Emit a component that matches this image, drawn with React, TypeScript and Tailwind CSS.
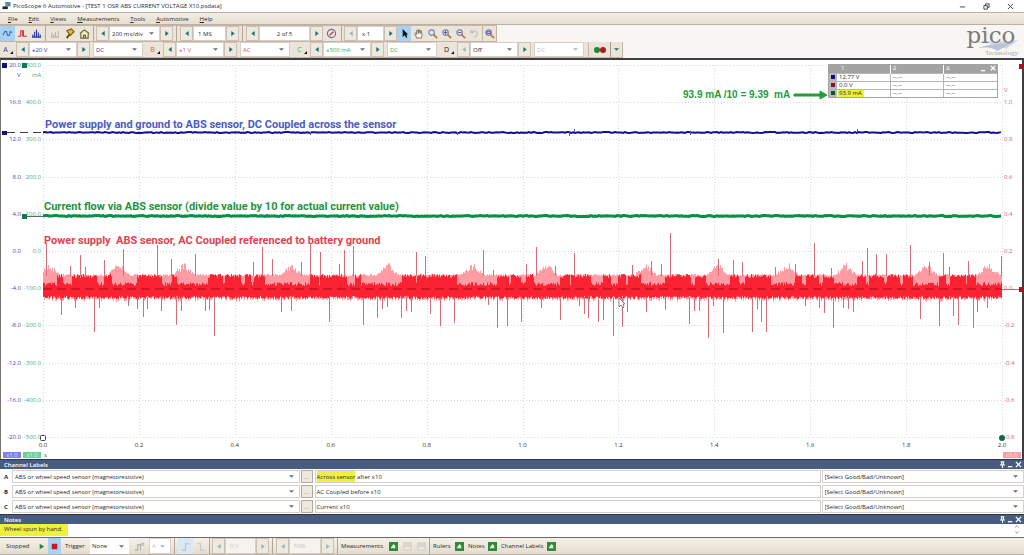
import type { ReactNode } from "react";
import clsx from "clsx";

const LEFT = 43;
const RIGHT = 1002;
const TOP = 65;
const STEP_X = 95.9;
const STEP_Y = 37.2;

// Noise peaks of the AC coupled trace as [x, tip]
const peaks = [
  [46, 243], [70, 266], [80, 255], [85, 267], [104, 260], [123, 249], [157, 245], [171, 259], [195, 254],
  [253, 262], [262, 247], [272, 259], [301, 262], [310, 244], [320, 252], [339, 264], [344, 250], [353, 246],
  [416, 252], [425, 256], [483, 250], [493, 270], [526, 264], [536, 247], [555, 266], [574, 253], [632, 265],
  [651, 261], [661, 264], [670, 233], [718, 259], [733, 260], [742, 262], [775, 267], [795, 264], [814, 243],
  [831, 268], [862, 261], [867, 248], [876, 254], [886, 254], [910, 245], [929, 262], [943, 253], [949, 267],
  [968, 261], [1001, 256],
];

const dips = [
  [61, 315], [75, 308], [94, 332], [99, 308], [128, 306], [137, 309], [143, 317], [147, 309], [161, 311],
  [176, 325], [181, 311], [205, 311], [209, 310], [214, 336], [281, 312], [291, 311], [329, 322], [363, 325],
  [377, 318], [382, 309], [387, 307], [401, 318], [406, 311], [411, 312], [430, 314], [440, 326], [454, 323],
  [488, 305], [497, 328], [507, 326], [521, 322], [541, 308], [560, 320], [579, 306], [584, 314], [588, 318],
  [598, 322], [603, 320], [613, 336], [622, 327], [627, 312], [646, 312], [665, 310], [689, 324], [694, 311],
  [699, 311], [708, 338], [713, 306], [723, 333], [752, 332], [757, 309], [761, 322], [766, 332], [805, 306],
  [819, 308], [824, 313], [833, 328], [843, 308], [848, 309], [853, 312], [920, 319], [939, 326], [953, 316],
  [958, 325], [973, 328], [977, 312], [987, 308],
];

// Stretches where the dense part of the trace fills the whole band
const dense = [
  [57, 62], [72, 96], [104, 111], [137, 161], [172, 176], [208, 222], [225, 240], [245, 250], [254, 264],
  [310, 318], [320, 346], [355, 360], [402, 415], [417, 440], [441, 456], [497, 508], [511, 520], [526, 533],
  [560, 569], [571, 590], [603, 610], [618, 625], [628, 640], [665, 690], [695, 705], [730, 738], [745, 770],
  [795, 801], [806, 818], [823, 833], [857, 865], [869, 883], [887, 899], [903, 912], [939, 945], [950, 965],
  [967, 975],
];

const bumps = [49, 118, 183, 291, 387, 472, 546, 645, 717, 787, 845, 926, 988];

function makeRandom(seed: number) {
  let s = seed;
  return () => {
    s = (s * 16807) % 2147483647;
    return s / 2147483647;
  };
}

function buildNoise() {
  const rand = makeRandom(77);
  let light = "";
  let dark = "";
  for (let x = LEFT; x < RIGHT; x++) {
    const dist = Math.min(...bumps.map((b) => Math.abs(b - x)));
    const lift = Math.max(0, 11 - dist) * (0.5 + rand() * 0.7);
    const lightTop = 274 + rand() * 2 - lift;
    const full = dense.some(([a, b]) => x >= a && x <= b);
    const darkTop = full ? 274 + rand() * 4 : 282 + rand() * 4;
    const bottom = 296 + rand() * 3;
    light += `M${x}.5 ${lightTop.toFixed(1)}V${(bottom + rand() * 3).toFixed(1)}`;
    dark += `M${x}.5 ${darkTop.toFixed(1)}V${bottom.toFixed(1)}`;
  }
  return { light, dark };
}

function buildFlat(y: number, seed: number, spread: number) {
  const rand = makeRandom(seed);
  let d = `M${LEFT} ${y}`;
  for (let x = LEFT + 2; x <= RIGHT; x += 2) {
    d += `L${x} ${(y + (rand() - 0.5) * spread).toFixed(1)}`;
  }
  return d;
}

const noise = buildNoise();

function Scope() {
  const rows = Array.from({ length: 11 }, (_, i) => TOP + i * STEP_Y);
  const cols = Array.from({ length: 11 }, (_, i) => LEFT + i * STEP_X);

  return (
    <svg viewBox="0 60 1024 399" className="block w-full text-[6px]" role="img" aria-label="Scope view">
      <rect x="0" y="60" width="1024" height="399" fill="#ffffff" />
      <rect x="0" y="60" width="1" height="399" fill="#77736e" />
      <rect x="1022" y="60" width="2" height="399" fill="#3f3f42" />

      <g stroke="#cfdede" strokeWidth="1" strokeDasharray="1 2">
        {rows.map((y) => (
          <line key={y} x1={LEFT} x2={RIGHT} y1={Math.round(y) + 0.5} y2={Math.round(y) + 0.5} />
        ))}
        {cols.map((x) => (
          <line key={x} x1={Math.round(x) + 0.5} x2={Math.round(x) + 0.5} y1={TOP} y2="437" />
        ))}
      </g>

      {rows.map((y, i) => (
        <g key={y} textAnchor="end">
          <text x="21" y={y + 2} fill="#4a40b8">{(20 - i * 4).toFixed(1)}</text>
          <text x="41" y={y + 2} fill="#3fae7c">{(500 - i * 100).toFixed(1)}</text>
        </g>
      ))}
      <text x="17" y="77" fill="#4a40b8">V</text>
      <text x="32" y="77" fill="#3fae7c">mA</text>

      {rows.slice(1).map((y, i) => (
        <text key={y} x="1004" y={y + 2} fill="#e0606a">{(1 - i * 0.2).toFixed(1).replace("-0.0", "0.0")}</text>
      ))}
      <text x="1004" y="92" fill="#e0606a">V</text>

      {cols.map((x, i) => (
        <text key={x} x={x} y="447" textAnchor="middle" fill="#333333">{(i * 0.2).toFixed(1)}</text>
      ))}

      {/* channel A */}
      <path d="M7 132.5H43" stroke="#444444" strokeDasharray="8 5" />
      <path d={buildFlat(132.5, 11, 1)} fill="none" stroke="#12128c" strokeWidth="2" />
      <path d="M574.5 129V132M569.5 132V136M310.5 132V135M457.5 132V135M690.5 132V135M857.5 129V132" stroke="#5555b0" />

      {/* channel C */}
      <path d="M27 216.5H43" stroke="#666666" />
      <path d={buildFlat(216, 23, 1)} fill="none" stroke="#0b8f45" strokeWidth="3" />

      {/* channel B */}
      <path d={noise.light} stroke="#ff9ba2" />
      <path d={noise.dark} stroke="#fb2232" />
      <path
        d={peaks.map(([x, y]) => `M${x}.5 ${y}V276`).join("") + dips.map(([x, y]) => `M${x}.5 297V${y}`).join("")}
        stroke="#d2707a"
      />
      <path d="M43 289H1002" stroke="#a30c1c" strokeDasharray="9 5" />
      <path d="M1002 289.5H1019" stroke="#b07070" />

      {/* axis handles */}
      <g fill="#10107c">
        <rect x="2" y="63" width="5" height="5" />
        <rect x="2" y="131" width="5" height="4" />
      </g>
      <g fill="#12774a">
        <rect x="22" y="63" width="5" height="5" />
        <rect x="22" y="214" width="5" height="5" />
      </g>
      <g fill="#a01824">
        <rect x="1019" y="64" width="4" height="5" />
        <rect x="1019" y="287" width="4" height="5" />
      </g>
      <rect x="40.5" y="435.5" width="5" height="5" rx="1" fill="#ffffff" stroke="#444444" />
      <circle cx="1002" cy="438" r="3" fill="#0a6b4a" />

      {/* axis scale badges */}
      <rect x="3" y="452" width="18" height="6" fill="#7f7fee" />
      <rect x="23" y="452" width="18" height="6" fill="#6fcf9a" />
      <rect x="1003" y="452" width="18" height="6" fill="#fb9da0" />
      <g fill="#ffffff" textAnchor="middle" opacity="0.7">
        <text x="12" y="457">x1.0</text>
        <text x="32" y="457">x1.0</text>
        <text x="1012" y="457">x1.0</text>
      </g>
      <text x="44" y="457" fill="#444444">s</text>

      <g className="font-[Roboto,sans-serif] text-[11px] font-bold">
        <text x="45" y="128" fill="#4a5cc4">Power supply and ground to ABS sensor, DC Coupled across the sensor</text>
        <text x="44" y="210" fill="#1f9440">Current flow via ABS sensor (divide value by 10 for actual current value)</text>
        <text x="44" y="244" fill="#e2434e" xmlSpace="preserve">Power supply  ABS sensor, AC Coupled referenced to battery ground</text>
      </g>
      <text x="683" y="98" fill="#279a3c" xmlSpace="preserve" className="font-['Liberation_Sans',sans-serif] text-[10px] font-bold">
        93.9 mA /10 = 9.39  mA
      </text>
      <path d="M794 94H820V91L827 95L820 99V96H794Z" fill="#279a3c" stroke="#279a3c" strokeLinejoin="round" />

      <path d="M619 298V307L621 305L623 308L624 307L623 304H625Z" fill="#ffffff" stroke="#555566" strokeWidth="0.7" />
    </svg>
  );
}

const readings = [
  { value: "12.77 V", color: "bg-[#10107c]", marked: false },
  { value: "0.0 V", color: "bg-[#8c1420]", marked: false },
  { value: "93.9 mA", color: "bg-[#0f5a34]", marked: true },
];

function RulerLegend() {
  return (
    <div className="absolute top-1 right-[26px] w-[170px] border border-[#a3a3a3] bg-white">
      <table className="w-full table-fixed border-collapse text-left leading-[7px]">
        <thead className="bg-[#a3a3a3] text-white">
          <tr className="h-[8px]">
            <th className="w-[8px] p-0" />
            <th className="p-0 pl-1 font-normal">1</th>
            <th className="border-l border-white p-0 pl-[2px] font-normal">2</th>
            <th className="border-l border-white p-0 pl-[2px] font-normal">
              <div className="flex items-center gap-[3px]">
                <span className="flex-1">Δ</span>
                <PanelButton label="Minimise rulers"><path d="M1 6.500H6" /></PanelButton>
                <PanelButton label="Close rulers"><path d="M1 1L6 6M6 1L1 6" /></PanelButton>
              </div>
            </th>
          </tr>
        </thead>
        <tbody>
          {readings.map((r) => (
            <tr key={r.value} className="h-[8px] border-t border-[#b5b5b5]">
              <td className="bg-[#b9b9b9] p-0">
                <div className={clsx("ml-[2px] h-[4px] w-[4px]", r.color)} />
              </td>
              <td className="p-0 pl-px">
                <span className={clsx("block px-px", r.marked ? "w-[26px] bg-[#eef03c]" : "")}>{r.value}</span>
              </td>
              <td className="border-l border-[#b5b5b5] p-0 pl-[2px]">--.--</td>
              <td className="border-l border-[#b5b5b5] p-0 pl-[2px]">--.--</td>
            </tr>
          ))}
        </tbody>
      </table>
    </div>
  );
}

function PanelButton({ label, children }: { label: string; children: ReactNode }) {
  return (
    <button type="button" aria-label={label} className="flex">
      <svg viewBox="0 0 8 8" className="h-[7px] w-[7px]" fill="none" stroke="currentColor" strokeWidth="1.5">
        {children}
      </svg>
    </button>
  );
}

function Arrow({ dir, label, faint }: { dir: "left" | "right"; label: string; faint?: boolean }) {
  return (
    <button
      type="button"
      aria-label={label}
      disabled={faint}
      className={clsx(
        "flex w-[13px] shrink-0 items-center justify-center border border-[#cdbfb2] bg-[#efe8dc]",
        faint ? "text-[#8fb9c4]" : "text-[#14727f]"
      )}
    >
      <svg viewBox="0 0 4 6" className="h-[5px] w-[4px]" fill="currentColor">
        <path d={dir === "left" ? "M4 0V6L0 3Z" : "M0 0V6L4 3Z"} />
      </svg>
    </button>
  );
}

interface DropProps {
  label: string;
  value: string;
  className?: string;
  disabled?: boolean;
}

function Drop({ label, value, className, disabled }: DropProps) {
  return (
    <div className={clsx("flex min-w-0 items-center border border-[#d8d0c8] bg-white", className)}>
      <select
        aria-label={label}
        disabled={disabled}
        className={clsx(
          "-mr-[10px] h-full w-full min-w-0 appearance-none bg-transparent pr-[10px] pl-[2px] outline-none",
          disabled && "opacity-30"
        )}
      >
        <option>{value}</option>
      </select>
      <svg viewBox="0 0 6 3" className="pointer-events-none mr-1 h-[3px] w-[5px] shrink-0" fill={disabled ? "#b8b8b8" : "#66727c"}>
        <path d="M0 0H6L3 3Z" />
      </svg>
    </div>
  );
}

function Field({ label, value, className, disabled }: DropProps) {
  return (
    <input
      aria-label={label}
      defaultValue={value}
      disabled={disabled}
      className={clsx("min-w-0 border border-[#d8d0c8] bg-white px-1 outline-none disabled:bg-[#f6f3ee] disabled:text-[#c9c5c0]", className)}
    />
  );
}

function Tool({ label, active, className, children }: { label: string; active?: boolean; className: string; children: ReactNode }) {
  return (
    <button
      type="button"
      aria-label={label}
      className={clsx("flex shrink-0 items-center justify-center", active && "bg-[#a9d2f2]", className)}
    >
      <svg viewBox="0 0 12 12" className="h-[11px] w-[11px]" fill="none" stroke="currentColor" strokeWidth="1.2">
        {children}
      </svg>
    </button>
  );
}

function Grip({ wide }: { wide?: boolean }) {
  return <span className={clsx("w-px shrink-0 bg-[#b3a597]", wide ? "mx-[3px]" : "mx-[2px]")} />;
}

function Lens({ mark }: { mark?: string }) {
  return (
    <>
      <path d="M7 7L11 11" stroke="#b5803c" strokeWidth="2" />
      <circle cx="5" cy="5" r="3" fill="#dfe6f6" stroke="#7a80a8" />
      {mark && <path d={mark} stroke="#5a4a9c" strokeWidth="1" />}
    </>
  );
}

function MainToolbar() {
  return (
    <div className="flex h-[17px] w-[497px] border-y border-r border-[#c4b5a8] bg-[#ebe4d9]">
      <Tool label="Scope mode" active className="w-[15px] text-[#3a6fc0]">
        <path d="M1 8L3 4L5 4L6 8L8 8L9 4L11 5" />
      </Tool>
      <Tool label="Persistence mode" className="w-[14px] text-[#c83848]">
        <path d="M1 9H4V3H7V9H11M6 3V9" />
      </Tool>
      <Tool label="Spectrum mode" className="w-[14px] text-[#2433a0]">
        <path d="M2 10V7M4 10V4M6 10V2M8 10V5M10 10V7M1 10H11" />
      </Tool>
      <Grip />
      <Tool label="Rulers" className="w-[14px] text-[#b9b4b0]">
        <path d="M2 10V5M4 10V7M6 10V4M9 3V9M1 10H10" />
      </Tool>
      <Tool label="Probes" className="w-[15px]">
        <path d="M3 11L6 7" stroke="#5a4a10" strokeWidth="2" />
        <path d="M3 3L8 1L11 4L7 8Z" fill="#e5b52c" stroke="#7a5a10" />
      </Tool>
      <Tool label="Home" className="w-[14px]">
        <path d="M1 6L6 2L11 6M2 6V11H10V6" fill="#f4e9b8" stroke="#6b6238" />
        <path d="M5 11V8H7V11" stroke="#6b6238" />
      </Tool>
      <Grip />
      <Arrow dir="left" label="Faster timebase" />
      <Drop label="Timebase" value="200 ms/div" className="w-[51px]" />
      <Arrow dir="right" label="Slower timebase" />
      <Grip wide />
      <Arrow dir="left" label="Fewer samples" />
      <Field label="Samples" value="1 MS" className="w-[33px]" />
      <Arrow dir="right" label="More samples" />
      <Grip wide />
      <Arrow dir="left" label="Previous waveform" />
      <Field label="Waveform" value="2 of 5" className="w-[51px] text-center" />
      <Arrow dir="right" label="Next waveform" />
      <Tool label="Waveform navigator" className="w-[16px]">
        <circle cx="6" cy="6" r="4.500" stroke="#6a6a9c" />
        <path d="M4 8L8 4" stroke="#c04050" strokeWidth="1.600" />
      </Tool>
      <Grip />
      <Arrow dir="left" label="Zoom out step" faint />
      <Field label="Zoom" value="x 1" className="w-[27px]" />
      <Arrow dir="right" label="Zoom in step" />
      <Tool label="Select" active className="w-[14px]">
        <path d="M4 1V10L6 8L8 11L9 10L8 7H10Z" fill="#111111" stroke="none" />
      </Tool>
      <Tool label="Pan" className="w-[15px]">
        <path d="M4 11L2 6L3 5L4 7V3L5 2L6 6V2H7L8 6V3H9L10 8L9 11Z" fill="#fff3e0" stroke="#555555" strokeWidth="0.8" />
      </Tool>
      <Tool label="Marquee zoom" className="w-[13px]"><Lens /></Tool>
      <Tool label="Zoom in" className="w-[14px]"><Lens mark="M3 5H7M5 3V7" /></Tool>
      <Tool label="Zoom out" className="w-[14px]"><Lens mark="M3 5H7" /></Tool>
      <Tool label="Undo zoom" className="w-[15px] text-[#b9bccb]">
        <path d="M2 5C5 2 9 3 9 6C9 8 8 9 6 10M2 2V5H5" />
      </Tool>
      <Tool label="Zoom to full" className="flex-1 border-l border-[#c4b5a8]"><Lens mark="M3 4H7V6H3Z" /></Tool>
    </div>
  );
}

interface Channel {
  name: string;
  range: string;
  coupling: string;
  color: string;
  off?: boolean;
}

const channels: Channel[] = [
  { name: "A", range: "±20 V", coupling: "DC", color: "text-[#3a36a8]" },
  { name: "B", range: "±1 V", coupling: "AC", color: "text-[#e0545e]" },
  { name: "C", range: "±500 mA", coupling: "DC", color: "text-[#35b070]" },
  { name: "D", range: "Off", coupling: "DC", color: "text-[#222222]", off: true },
];

function ChannelToolbar() {
  return (
    <div className="flex h-[16px] w-[623px] border-b border-r border-[#c4b5a8] bg-[#ebe4d9]">
      {channels.map((ch) => (
        <div key={ch.name} className={clsx("flex w-[147px] shrink-0 pr-[3px]", ch.color)}>
          <button type="button" aria-label={`Channel ${ch.name} options`} className="flex w-[16px] items-center justify-center gap-[2px] text-[7px]">
            {ch.name}
            <svg viewBox="0 0 4 4" className="mt-[5px] h-[3px] w-[3px]" fill="#111111">
              <path d="M4 0V4H0Z" />
            </svg>
          </button>
          <Arrow dir="left" label={`Channel ${ch.name} range down`} faint={ch.off} />
          <Drop label={`Channel ${ch.name} range`} value={ch.range} className="w-[48px]" />
          <Arrow dir="right" label={`Channel ${ch.name} range up`} />
          <Drop label={`Channel ${ch.name} coupling`} value={ch.coupling} className="ml-[3px] w-[50px]" disabled={ch.off} />
        </div>
      ))}
      <button type="button" aria-label="Channel guide" className="flex flex-1 items-center justify-center border-l border-[#c4b5a8]">
        <svg viewBox="0 0 14 8" className="h-[8px] w-[14px]">
          <path d="M4 4H10" stroke="#333333" />
          <circle cx="4" cy="4" r="3" fill="#1c8a34" />
          <circle cx="10" cy="4" r="3" fill="#b01822" />
        </svg>
      </button>
      <button type="button" aria-label="Guide menu" className="flex w-[12px] items-center justify-center border-l border-[#a89a8e]">
        <svg viewBox="0 0 6 3" className="h-[3px] w-[5px]" fill="#14727f"><path d="M0 0H6L3 3Z" /></svg>
      </button>
    </div>
  );
}

function Logo() {
  return (
    <svg viewBox="0 0 68 33" className="h-[33px] w-[68px] overflow-visible" role="img" aria-label="Pico Technology">
      <path d="M10 18C28 15 42 17 62 15L50 24C42 18 26 17 10 18Z" fill="#d3d9e6" />
      <path d="M22 23C32 19 42 19 60 17C52 20 46 23 42 26C36 22 30 22 22 23Z" fill="#b9c4d8" />
      <text x="35" y="18" textAnchor="middle" fill="#7d7a78" className="font-['DejaVu_Serif',serif] text-[23px]">pico</text>
      <text x="29" y="30" fill="#a9a7a6" className="font-['Liberation_Serif',serif] text-[7px]">Technology</text>
    </svg>
  );
}

function PanelHeader({ title }: { title: string }) {
  return (
    <div className="flex h-[10px] items-center gap-px border-t border-[#2f3542] bg-[#485b80] pr-[2px] pl-1 text-white">
      <h2 className="flex-1 font-semibold">{title}</h2>
      <PanelButton label={`Pin ${title}`}><path d="M2 1H6M3 1V4M5 1V4M1 4.500H7M4 4V8" strokeWidth="1.200" /></PanelButton>
      <PanelButton label={`Minimise ${title}`}><path d="M1 6.500H6" /></PanelButton>
      <PanelButton label={`Close ${title}`}><path d="M1 1L7 7M7 1L1 7" /></PanelButton>
    </div>
  );
}

const labelRows = [
  { id: "A", marked: "Across sensor", note: " after x10" },
  { id: "B", marked: "", note: "AC Coupled before x10" },
  { id: "C", marked: "", note: "Current x10" },
];

function ChannelLabels() {
  return (
    <section className="bg-white">
      <PanelHeader title="Channel Labels" />
      {labelRows.map((row) => (
        <div key={row.id} className="grid h-[15px] grid-cols-[12px_287fr_14px_506fr_203fr] py-px">
          <span className="self-center pl-1 font-bold">{row.id}</span>
          <Drop label={`Sensor ${row.id}`} value="ABS or wheel speed sensor (magnetoresistive)" className="border-[#cfcfcf]" />
          <button type="button" aria-label={`Edit label ${row.id}`} className="mx-px flex items-center justify-center border border-[#b5a89c] bg-[#efe8dc] text-[#8a8078]">
            ...
          </button>
          <div
            role="textbox"
            aria-label={`Note ${row.id}`}
            contentEditable
            suppressContentEditableWarning
            className="ml-px flex items-center border border-[#cfcfcf] pl-px whitespace-pre outline-none"
          >
            {row.marked && <span className="flex h-full items-center bg-[#eef03c]">{row.marked}</span>}
            <span>{row.note}</span>
          </div>
          <Drop label={`Result ${row.id}`} value="[Select Good/Bad/Unknown]" className="ml-px border-[#cfcfcf]" />
        </div>
      ))}
    </section>
  );
}

function Notes() {
  return (
    <section className="bg-white">
      <PanelHeader title="Notes" />
      <div className="flex h-[13px] justify-between pr-1">
        <div
          role="textbox"
          aria-label="Notes"
          contentEditable
          suppressContentEditableWarning
          className="h-[12px] w-[68px] bg-[#eef03c] pl-1 leading-[11px] outline-none"
        >
          Wheel spun by hand.
        </div>
        <svg viewBox="0 0 6 12" className="h-[11px] w-[6px]" fill="none" stroke="#9a9a9a">
          <path d="M1 4L3 2L5 4M1 8L3 10L5 8" />
        </svg>
      </div>
    </section>
  );
}

function Toggle({ label, faint }: { label: string; faint?: boolean }) {
  return (
    <button
      type="button"
      aria-label={label}
      className={clsx("flex h-[9px] w-[9px] shrink-0 items-center justify-center", faint ? "bg-[#d9d6cc]" : "bg-[#2f8a3a]")}
    >
      <svg viewBox="0 0 8 8" className="h-[7px] w-[7px]">
        {faint ? <path d="M1 5H7V7H1Z" fill="#f1eee8" /> : <path d="M1 5L4 1L6 3V6H1Z" fill="#e2f4dc" />}
      </svg>
    </button>
  );
}

function StatusBar() {
  return (
    <footer className="flex h-[18px] items-stretch border-y border-t-[#6e6a66] border-b-[#b9b0a6] bg-linear-to-b from-[#f5f1ea] to-[#e5dccd]">
      <span className="w-[34px] self-center pl-[6px]">Stopped</span>
      <Tool label="Start capture" className="w-[14px]">
        <path d="M4 3V9L9 6Z" fill="#1f8a3a" stroke="none" />
      </Tool>
      <Tool label="Stop capture" active className="w-[13px]">
        <rect x="3" y="3" width="6" height="6" fill="#c41822" stroke="none" />
      </Tool>
      <label htmlFor="trigger" className="w-[29px] self-center pl-1">Trigger</label>
      <div className="flex w-[39px] items-center bg-white">
        <select id="trigger" className="-mr-[10px] w-full appearance-none bg-transparent pr-[10px] pl-[2px] outline-none">
          <option>None</option>
        </select>
        <svg viewBox="0 0 6 3" className="pointer-events-none mr-1 h-[3px] w-[5px] shrink-0" fill="#66727c">
          <path d="M0 0H6L3 3Z" />
        </svg>
      </div>
      <Tool label="Advanced triggers" className="w-[20px] text-[#b5b1ac]">
        <path d="M1 10H4V4H7V10M8 2L11 5M11 2L8 5" />
      </Tool>
      <Drop label="Trigger source" value="A" className="w-[22px]" disabled />
      <Grip wide />
      <Tool label="Rising edge" className="w-[15px] bg-[#dbe8f2] text-[#aac4d8]">
        <path d="M2 10H6V3H10" />
      </Tool>
      <Tool label="Falling edge" className="w-[14px] text-[#c5c9cc]">
        <path d="M2 3H6V10H10" />
      </Tool>
      <Grip />
      <Arrow dir="left" label="Threshold down" faint />
      <Field label="Threshold" value="0 V" className="w-[31px]" disabled />
      <Arrow dir="right" label="Threshold up" faint />
      <Grip wide />
      <Arrow dir="left" label="Pre-trigger down" faint />
      <Field label="Pre-trigger" value="50%" className="w-[32px]" disabled />
      <Arrow dir="right" label="Pre-trigger up" faint />
      <Grip wide />
      <div className="flex items-center gap-[5px]">
        <span className="w-[43px]">Measurements</span>
        <Toggle label="Add measurement" />
        <Toggle label="Edit measurement" faint />
        <Toggle label="Delete measurement" faint />
      </div>
      <Grip wide />
      <div className="flex items-center gap-1">
        <span className="w-[18px]">Rulers</span>
        <Toggle label="Toggle rulers" />
        <span className="w-[16px]">Notes</span>
        <Toggle label="Toggle notes" />
        <span className="w-[42px] whitespace-nowrap">Channel Labels</span>
        <Toggle label="Toggle channel labels" />
      </div>
    </footer>
  );
}

const menu = ["File", "Edit", "Views", "Measurements", "Tools", "Automotive", "Help"];

export default function App() {
  return (
    <div className="w-full overflow-hidden bg-[#f8f6f3] font-['Open_Sans','Noto_Sans',sans-serif] text-[6px] leading-[8px] text-[#2a2a2a]">
      <header className="flex h-[12px] items-center bg-white pl-[2px]">
        <svg viewBox="0 0 9 9" className="h-[8px] w-[9px]">
          <rect x="3" y="0" width="6" height="5" fill="#4a8c9c" />
          <path d="M0 5H6V8H0Z" fill="#222222" />
          <path d="M2 1L5 4" stroke="#d8e8f0" />
        </svg>
        <h1 className="flex-1 pl-[2px]">PicoScope 6 Automotive - [TEST 1 OSR ABS CURRENT VOLTAGE X10.psdata]</h1>
        <div className="flex gap-[17px] pr-[10px]">
          <PanelButton label="Minimise"><path d="M1 4.500H7" stroke="#333333" strokeWidth="1" /></PanelButton>
          <PanelButton label="Restore"><path d="M1 3H5V7H1ZM3 3V1H7V5H5" stroke="#333333" strokeWidth="1" /></PanelButton>
          <PanelButton label="Close"><path d="M1 1L7 7M7 1L1 7" stroke="#333333" strokeWidth="1" /></PanelButton>
        </div>
      </header>
      <nav className="flex h-[13px] items-center gap-[11px] border-y border-[#b9b0a6] bg-linear-to-b from-[#f3eee6] to-[#e6dece] pl-2">
        {menu.map((item) => (
          <button key={item} type="button">
            <span className="underline">{item[0]}</span>
            {item.slice(1)}
          </button>
        ))}
      </nav>
      <div className="flex items-start justify-between">
        <div>
          <MainToolbar />
          <ChannelToolbar />
        </div>
        <Logo />
      </div>
      <main className="relative border-t-2 border-[#3f3f42]">
        <Scope />
        <RulerLegend />
      </main>
      <ChannelLabels />
      <Notes />
      <StatusBar />
    </div>
  );
}
